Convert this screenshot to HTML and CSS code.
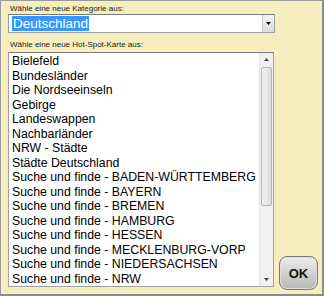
FILE: index.html
```html
<!DOCTYPE html>
<html lang="de">
<head>
    <meta charset="UTF-8">
    <title>Hot-Spot-Karte</title>
    <link rel="stylesheet" href="styles.css">
</head>
<body>
    <div class="window">
        <div class="field">
            <div class="label">Wähle eine neue Kategorie aus:</div>
            <div class="combo">
                <span class="combo-value"><span class="selected">Deutschland</span></span>
                <span class="combo-btn">
                    <svg width="5" height="3" viewBox="0 0 5 3"><path d="M0 0h5L2.5 3z" fill="#000"/></svg>
                </span>
            </div>
        </div>

        <div class="field">
            <div class="label">Wähle eine neue Hot-Spot-Karte aus:</div>
            <div class="bottom-row">
                <div class="listbox">
                    <ul class="items">
                        <li>Bielefeld</li>
                        <li>Bundesländer</li>
                        <li>Die Nordseeinseln</li>
                        <li>Gebirge</li>
                        <li>Landeswappen</li>
                        <li>Nachbarländer</li>
                        <li>NRW - Städte</li>
                        <li>Städte Deutschland</li>
                        <li>Suche und finde - BADEN-WÜRTTEMBERG</li>
                        <li>Suche und finde - BAYERN</li>
                        <li>Suche und finde - BREMEN</li>
                        <li>Suche und finde - HAMBURG</li>
                        <li>Suche und finde - HESSEN</li>
                        <li>Suche und finde - MECKLENBURG-VORP</li>
                        <li>Suche und finde - NIEDERSACHSEN</li>
                        <li>Suche und finde - NRW</li>
                    </ul>
                    <div class="scrollbar">
                        <span class="arrow">
                            <svg width="5" height="3" viewBox="0 0 5 3"><path d="M0 3h5L2.5 0z" fill="#444"/></svg>
                        </span>
                        <div class="track">
                            <div class="thumb"></div>
                        </div>
                        <span class="arrow">
                            <svg width="5" height="3" viewBox="0 0 5 3"><path d="M0 0h5L2.5 3z" fill="#444"/></svg>
                        </span>
                    </div>
                </div>
                <button class="ok-btn">OK</button>
            </div>
        </div>
    </div>
</body>
</html>
```

FILE: styles.css
```css
* {
    margin: 0;
    padding: 0;
    box-sizing: border-box;
}

body {
    font-family: 'Liberation Sans', Arial, sans-serif;
    background: #f6eebf;
    width: 324px;
    height: 296px;
    overflow: hidden;
}

.window {
    width: 324px;
    height: 296px;
    background: #f6eebf;
    border: 1px solid #9a9a9a;
    border-right: 2px solid #8c8c8c;
    border-bottom: 2px solid #8c8c8c;
    padding: 3px 0 0 7px;
}

.label {
    font-size: 8px;
    color: #222;
    height: 9px;
    line-height: 9px;
    padding-left: 2px;
}

.field + .field {
    margin-top: 7px;
}

.combo {
    width: 267px;
    height: 19px;
    margin-top: 1px;
    background: #fff;
    border: 1px solid #a0a0a0;
    border-top-color: #7a7a7a;
    display: flex;
    align-items: center;
}

.combo-value {
    flex: 1;
    padding-left: 3px;
    font-size: 13.5px;
    line-height: 15px;
}

.selected {
    display: inline-block;
    background: #3399ff;
    color: #fff;
    padding: 0 1px;
}

.combo-btn {
    width: 12px;
    height: 17px;
    background: linear-gradient(#f4f4f4, #dcdcdc);
    border-left: 1px solid #c8c8c8;
    display: flex;
    align-items: center;
    justify-content: center;
}

.bottom-row {
    display: flex;
    align-items: flex-end;
    margin-top: 3px;
}

.listbox {
    width: 266px;
    height: 235px;
    background: #fff;
    border: 1px solid #a0a0a0;
    border-top-color: #7a7a7a;
    display: flex;
    overflow: hidden;
}

.items {
    flex: 1;
    list-style: none;
    padding: 1px 0 0 3px;
    font-size: 12.3px;
    line-height: 14.5px;
    color: #000;
    white-space: nowrap;
    overflow: hidden;
}

.scrollbar {
    width: 14px;
    background: #f0f0f0;
    border-left: 1px solid #e6e6e6;
    display: flex;
    flex-direction: column;
}

.arrow {
    height: 13px;
    display: flex;
    align-items: center;
    justify-content: center;
}

.track {
    flex: 1;
    padding: 1px 1px;
}

.thumb {
    height: 139px;
    border: 1px solid #b4b4b4;
    border-radius: 2px;
    background: linear-gradient(90deg, #f2f2f2, #dcdcdc);
}

.ok-btn {
    width: 39px;
    height: 34px;
    margin: 0 0 -3px 5px;
    border: 1px solid #7a7a7a;
    border-radius: 8px;
    background: linear-gradient(#ececec, #b8b8b8);
    box-shadow: inset 0 0 0 1px #e0e0e0;
    font-family: 'Liberation Sans', Arial, sans-serif;
    font-weight: bold;
    font-size: 13px;
    color: #111;
}
```
